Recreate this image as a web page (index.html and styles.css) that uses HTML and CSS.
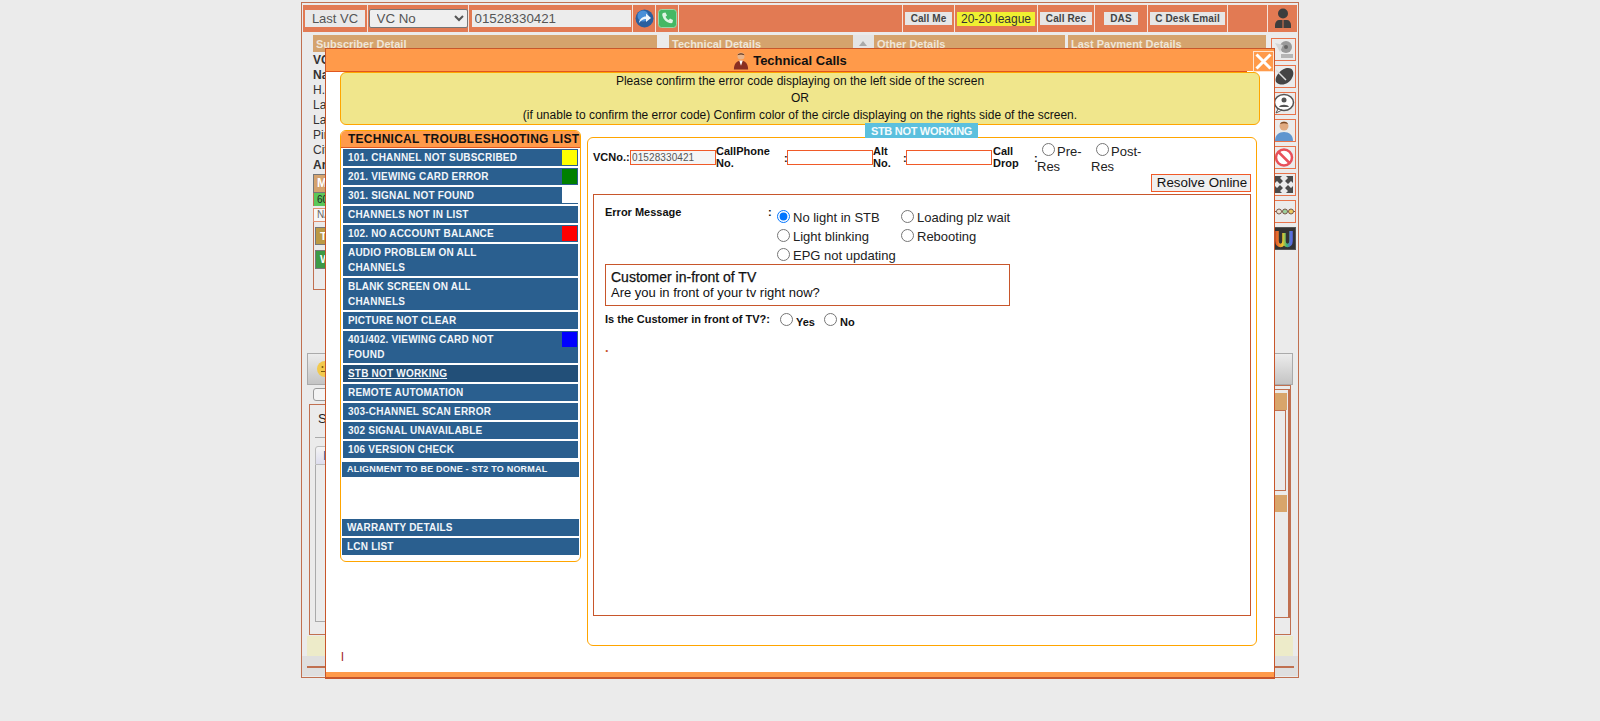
FILE: index.html
```html
<!DOCTYPE html>
<html lang="en">
<head>
  <meta charset="UTF-8">
  <title>Technical Calls</title>
  <link rel="stylesheet" href="styles.css">
</head>
<body>
<div class="app">

  <div class="toolbar">
    <div class="cell w65"><button class="btn-last">Last VC</button></div>
    <div class="cell w101"><select class="vc-select"><option>VC No</option></select></div>
    <div class="cell w164"><input class="vc-input" type="text" value="01528330421"></div>
    <div class="cell w23">
      <svg width="19" height="19" viewBox="0 0 19 19"><circle cx="9.500" cy="9.500" r="9" fill="#2b5f9e"/><circle cx="8" cy="7" r="5.500" fill="#4a8fd8"/><path d="M4 14c.5-4 3.500-6.500 7-6.500V4.500l5 4.500-5 4v-3c-3 0-5 1.500-7 4z" fill="#f2f6fb"/></svg>
    </div>
    <div class="cell w23">
      <svg width="19" height="19" viewBox="0 0 19 19"><rect x=".5" y=".5" width="18" height="18" rx="3" fill="#45b864" stroke="#9ad6a8"/><path d="M5 4l2.500-.5 1.500 3-1.500 1.200c.7 1.500 1.800 2.600 3.300 3.300l1.200-1.500 3 1.500-.5 2.500c-.3.600-1.500 1-3 .6C8 13 5.500 10.500 4.500 7 4 5.500 4.400 4.300 5 4z" fill="#dff5e4"/></svg>
    </div>
    <div class="cell grow"></div>
    <div class="cell w52"><button class="btn-small bw47">Call Me</button></div>
    <div class="cell w83"><span class="league">20-20 league</span></div>
    <div class="cell w57"><button class="btn-small bw52">Call Rec</button></div>
    <div class="cell w53"><button class="btn-small bw34">DAS</button></div>
    <div class="cell w80"><button class="btn-small bw75">C Desk Email</button></div>
    <div class="cell w40"></div>
    <div class="cell w29 last">
      <svg width="18" height="21" viewBox="0 0 18 21"><circle cx="9" cy="5.500" r="5" fill="#3d3d3d"/><path d="M1 20v-3c0-3 2-5 4-5h8c2 0 4 2 4 5v3z" fill="#3d3d3d"/><path d="M9 12v8" stroke="#e27a53"/></svg>
    </div>
  </div>

  <div class="upper">
    <div class="details">
      <div class="heads">
        <div class="head h-sub">Subscriber Detail</div>
        <div class="head h-tech">Technical Details</div>
        <div class="scroll-up"></div>
        <div class="head h-other">Other Details</div>
        <div class="head h-pay">Last Payment Details</div>
      </div>
      <div class="field strong">VC No</div>
      <div class="field strong">Name</div>
      <div class="field">H.No</div>
      <div class="field">Land Mark</div>
      <div class="field">Land Line</div>
      <div class="field">Pin</div>
      <div class="field">City</div>
      <div class="field strong">Area</div>
      <div class="m-box">
        <div class="m-head">M</div>
        <div class="m-green">60</div>
        <div class="m-na">NA</div>
      </div>
      <div class="t-box">
        <div class="t-head">To</div>
        <div class="w-head">W</div>
      </div>
    </div>
    <div class="side">
      <div class="side-icon">
        <svg width="22" height="21" viewBox="0 0 22 21"><circle cx="13" cy="8" r="6" fill="#9a9a9a"/><path d="M2 4l8 2-3 7z" fill="#d5d5d5"/><path d="M8 15h12v4H8z" fill="#b5b5b5"/><circle cx="13" cy="8" r="2" fill="#666"/></svg>
      </div>
      <div class="side-icon">
        <svg width="22" height="21" viewBox="0 0 22 21"><path d="M3 16C1 10 9 2 15 2c5 0 7 5 4 10-3 6-11 9-16 4z" fill="#444"/><path d="M3 4l10 10" stroke="#ddd" stroke-width="1.500"/></svg>
      </div>
      <div class="side-icon">
        <svg width="22" height="21" viewBox="0 0 22 21"><ellipse cx="11" cy="9.500" rx="9.500" ry="8" fill="#fff" stroke="#555" stroke-width="1.500"/><circle cx="11" cy="7" r="2.500" fill="#555"/><path d="M6 14c1-3 9-3 10 0z" fill="#555"/><path d="M5 16l-2 4 6-3z" fill="#fff" stroke="#555"/></svg>
      </div>
      <div class="side-icon">
        <svg width="22" height="21" viewBox="0 0 22 21"><circle cx="11" cy="6" r="4.500" fill="#e0aa80"/><path d="M7 4c1-3 7-3 8 0-3-1-5-1-8 0z" fill="#7a4a25"/><path d="M2 21c0-6 4-9 9-9s9 3 9 9z" fill="#5f95cf"/></svg>
      </div>
      <div class="side-icon">
        <svg width="22" height="21" viewBox="0 0 22 21"><circle cx="11" cy="10.500" r="8" fill="#fff" stroke="#e8505a" stroke-width="2.500"/><path d="M5.500 5l11 11" stroke="#e8505a" stroke-width="2.500"/></svg>
      </div>
      <div class="side-icon">
        <svg width="22" height="21" viewBox="0 0 22 21"><path d="M2 2h7L7 4l3 3-3 3-3-3-2 2zM20 2v7l-2-2-3 3-3-3 3-3-2-2zM2 19v-7l2 2 3-3 3 3-3 3 2 2zM20 19h-7l2-2-3-3 3-3 3 3 2-2z" fill="#4a4a4a"/></svg>
      </div>
      <div class="side-icon">
        <svg width="22" height="21" viewBox="0 0 22 21"><path d="M0 10.500h22" stroke="#7a5a4a"/><circle cx="6" cy="10.500" r="2.500" fill="#e9dfd0" stroke="#7a5a4a"/><circle cx="12" cy="10.500" r="2.500" fill="#9ccf9c" stroke="#7a5a4a"/><circle cx="18" cy="10.500" r="2.500" fill="#e8c860" stroke="#7a5a4a"/></svg>
      </div>
      <div class="side-icon dark">
        <svg width="22" height="21" viewBox="0 0 22 21"><defs><linearGradient id="rainbow" x1="0" x2="1" y1="0" y2="0"><stop offset="0" stop-color="#e8632c"/><stop offset=".4" stop-color="#e8c830"/><stop offset=".7" stop-color="#3cb878"/><stop offset="1" stop-color="#5a6ae0"/></linearGradient></defs><path d="M4 3v10c0 6 7 6 7 0V5v8c0 6 7 6 7 0V3" fill="none" stroke="url(#rainbow)" stroke-width="3.500"/></svg>
      </div>
    </div>
  </div>

  <div class="face-btn">
    <svg width="16" height="16" viewBox="0 0 16 16"><circle cx="8" cy="8" r="8" fill="#f2c94c"/><circle cx="5.500" cy="6" r="1" fill="#7a5a10"/><path d="M4 10.500h6" stroke="#7a5a10"/></svg>
  </div>

  <div class="lower">
    <div class="case-col">
      <div class="check-row"><span class="fake-check"></span></div>
      <div class="case-panel">
        <div class="case-title">S</div>
        <div class="case-rule"></div>
        <div class="case-tab">I</div>
        <div class="case-inner"></div>
      </div>
    </div>
    <div class="info-col">
      <div class="info-box">
        <div class="info-head"></div>
        <div class="info-body"></div>
        <div class="info-head second"></div>
      </div>
    </div>
  </div>

  <div class="yellow-strip"></div>
  <div class="footer-strip"><div class="footer-line"></div></div>

  <!-- popup -->
  <div class="modal">
    <div class="modal-title">
      <svg width="16" height="19" viewBox="0 0 18 20"><circle cx="9" cy="5" r="4" fill="#e8b48c"/><path d="M5 4c1-3 7-3 8 0-3-1-5-1-8 0z" fill="#5a3018"/><path d="M1 20c0-6 3-10 8-10s8 4 8 10z" fill="#8a2f22"/><path d="M7 10l2 6 2-6z" fill="#fff"/></svg>
      <span>Technical Calls</span>
    </div>
    <div class="modal-rule"></div>
    <button class="modal-close">
      <svg width="17" height="17" viewBox="0 0 17 17"><path d="M1.500 1.500l14 14M15.500 1.500l-14 14" stroke="#fff" stroke-width="3"/></svg>
    </button>

    <div class="notice">
      <div>Please confirm the error code displaying on the left side of the screen</div>
      <div>OR</div>
      <div>(if unable to confirm the error code) Confirm color of the circle displaying on the rights side of the screen.</div>
    </div>

    <div class="modal-body">
      <div class="trouble-list">
        <div class="trouble-head">TECHNICAL TROUBLESHOOTING LIST</div>
        <div class="trouble-items">
          <div class="item">101. CHANNEL NOT SUBSCRIBED<span class="swatch sw-yellow"></span></div>
          <div class="item">201. VIEWING CARD ERROR<span class="swatch sw-green"></span></div>
          <div class="item">301. SIGNAL NOT FOUND<span class="swatch sw-white"></span></div>
          <div class="item">CHANNELS NOT IN LIST</div>
          <div class="item">102. NO ACCOUNT BALANCE<span class="swatch sw-red"></span></div>
          <div class="item narrow">AUDIO PROBLEM ON ALL CHANNELS</div>
          <div class="item narrow">BLANK SCREEN ON ALL CHANNELS</div>
          <div class="item">PICTURE NOT CLEAR</div>
          <div class="item narrow">401/402. VIEWING CARD NOT FOUND<span class="swatch sw-blue"></span></div>
          <div class="item active">STB NOT WORKING</div>
          <div class="item">REMOTE AUTOMATION</div>
          <div class="item">303-CHANNEL SCAN ERROR</div>
          <div class="item">302 SIGNAL UNAVAILABLE</div>
          <div class="item">106 VERSION CHECK</div>
          <div class="item align">ALIGNMENT TO BE DONE - ST2 TO NORMAL</div>
          <div class="item wide warranty">WARRANTY DETAILS</div>
          <div class="item wide">LCN LIST</div>
        </div>
      </div>

      <div class="work-panel">
        <div class="work-tab">STB NOT WORKING</div>
        <div class="call-row">
          <label class="lbl lbl-vc">VCNo.:</label>
          <input class="call-input" type="text" value="01528330421">
          <label class="lbl lbl-phone">CallPhone No.</label>
          <span class="colon">:</span>
          <input class="call-input blank" type="text">
          <label class="lbl lbl-alt">Alt No.</label>
          <span class="colon">:</span>
          <input class="call-input blank" type="text">
          <label class="lbl lbl-drop">Call Drop</label>
          <span class="colon">:</span>
          <div class="res-choice"><input type="radio" name="drop">Pre-Res</div>
          <div class="res-choice"><input type="radio" name="drop">Post-Res</div>
        </div>
        <div class="resolve-row"><button class="resolve-btn">Resolve Online</button></div>

        <div class="error-box">
          <div class="error-row">
            <div class="lbl error-label">Error Message</div>
            <span class="colon error-colon">:</span>
            <div class="error-options">
              <label class="opt"><input type="radio" name="err" checked>No light in STB</label>
              <label class="opt"><input type="radio" name="err">Loading plz wait</label>
              <label class="opt"><input type="radio" name="err">Light blinking</label>
              <label class="opt"><input type="radio" name="err">Rebooting</label>
              <label class="opt"><input type="radio" name="err">EPG not updating</label>
            </div>
          </div>
          <div class="customer-box">
            <div class="customer-title">Customer in-front of TV</div>
            <div>Are you in front of your tv right now?</div>
          </div>
          <div class="question-row">
            <div class="lbl question-label">Is the Customer in front of TV?:</div>
            <label class="yes-no"><input type="radio" name="front">Yes</label>
            <label class="yes-no"><input type="radio" name="front">No</label>
          </div>
          <div class="error-dot">.</div>
        </div>
      </div>
    </div>

    <div class="modal-note">l</div>
    <div class="modal-bottom"></div>
  </div>
</div>
</body>
</html>
```

FILE: styles.css
```css
* {
  box-sizing: border-box;
}
html, body {
  height: 721px;
  overflow: hidden;
}
body {
  margin: 0;
  background-color: #ebebeb;
  color: #222;
  font-family: "Liberation Sans", Arial, sans-serif;
  font-size: 12px;
}
button, input, select {
  font-family: "Liberation Sans", Arial, sans-serif;
}

.app {
  position: relative;
  width: 998px;
  height: 676px;
  margin: 2px auto 0;
  padding-top: 2px;
  border: 1px solid #c07050;
  background-color: #ebebeb;
}

/* top bar */
.toolbar {
  display: flex;
  height: 27px;
  margin: 0 1px;
  background-color: #e27a53;
}
.cell {
  display: flex;
  align-items: center;
  justify-content: center;
  flex: none;
  border-right: 1px solid #f6e3da;
}
.cell.last {
  border-right: none;
}
.grow { flex: 1; }
.w65 { width: 65px; }
.w101 { width: 101px; }
.w164 { width: 164px; }
.w23 { width: 23px; }
.w52 { width: 52px; }
.w83 { width: 83px; }
.w57 { width: 57px; }
.w53 { width: 53px; }
.w80 { width: 80px; }
.w40 { width: 40px; }
.w29 { width: 29px; }
.btn-last {
  width: 60px;
  height: 17px;
  padding: 0;
  border: none;
  background-color: #e9e9e9;
  color: #555;
  font-size: 13px;
}
.vc-select {
  width: 99px;
  height: 19px;
  padding: 0 0 0 3px;
  border: 1px solid #767676;
  border-radius: 2px;
  background-color: #efefef;
  color: #555;
  font-size: 13.33px;
}
.vc-input {
  width: 159px;
  height: 17px;
  margin-left: 1px;
  padding: 0 3px;
  border: none;
  background-color: #ececec;
  color: #555;
  font-size: 13.33px;
}
.btn-small {
  height: 13px;
  padding: 0;
  border: none;
  background-color: #e6e6e6;
  color: #444;
  font-size: 10px;
  font-weight: bold;
  letter-spacing: .1px;
}
.bw47 { width: 47px; }
.bw52 { width: 52px; }
.bw34 { width: 34px; }
.bw75 { width: 75px; }
.league {
  width: 78px;
  height: 14px;
  background-color: #f0f030;
  color: #333;
  font-size: 12px;
  line-height: 14px;
  text-align: center;
}

/* page behind the popup */
.upper {
  display: flex;
  height: 318px;
}
.details {
  flex: 1;
  min-width: 0;
  padding: 3px 0 0 11px;
}
.heads {
  display: flex;
  height: 17px;
  margin-bottom: 1px;
}
.head {
  height: 17px;
  padding-left: 3px;
  background-color: #d5a36d;
  color: #f0e6d8;
  font-size: 11px;
  font-weight: bold;
  line-height: 18px;
}
.h-sub { width: 344px; margin-right: 12px; }
.h-tech { width: 184px; }
.h-other { width: 191px; margin-right: 3px; }
.h-pay { width: 198px; }
.scroll-up {
  position: relative;
  width: 21px;
  background-color: #e4e4e4;
}
.scroll-up::after {
  content: "";
  position: absolute;
  left: 6px;
  top: 6px;
  border: 4px solid transparent;
  border-top: none;
  border-bottom: 5px solid #aaa;
}
.field {
  height: 15px;
  color: #333;
  font-size: 12px;
  line-height: 15px;
}
.strong {
  font-weight: bold;
}
.m-box {
  margin-top: 1px;
}
.m-head {
  width: 300px;
  height: 19px;
  padding-left: 3px;
  border: 1px solid #777;
  background-color: #d5a36d;
  color: #fff;
  font-weight: bold;
  line-height: 17px;
}
.m-green {
  width: 300px;
  height: 13px;
  padding-left: 3px;
  background-color: #5ac85a;
  border-left: 1px solid #c07050;
  font-size: 10px;
  line-height: 13px;
}
.m-na {
  width: 300px;
  height: 14px;
  margin-top: 2px;
  padding-left: 3px;
  border: 1px solid #e09070;
  background-color: #f7f7f7;
  color: #666;
  font-size: 10px;
  line-height: 12px;
}
.t-box {
  width: 300px;
  height: 68px;
  padding: 5px 0 0 1px;
  border-left: 1px solid #c07050;
  border-bottom: 1px solid #c07050;
}
.t-head {
  height: 18px;
  padding-left: 4px;
  border: 1px solid #777;
  background-color: #bb9a45;
  color: #fff;
  font-size: 11px;
  font-weight: bold;
  line-height: 16px;
}
.w-head {
  height: 19px;
  margin-top: 5px;
  padding-left: 4px;
  border: 1px solid #777;
  background-color: #3c9a46;
  color: #fff;
  font-size: 11px;
  font-weight: bold;
  line-height: 17px;
}
.side {
  display: flex;
  flex-direction: column;
  gap: 4px;
  flex: none;
  width: 25px;
  margin: 6px 2px 0 5px;
}
.side-icon {
  display: flex;
  align-items: center;
  justify-content: center;
  width: 25px;
  height: 23px;
  border: 1px solid #e8734a;
}
.side-icon.dark {
  background-color: #333;
  border-color: #555;
}
.face-btn {
  display: flex;
  align-items: center;
  height: 32px;
  margin: 3px 5px 0;
  padding-left: 9px;
  border: 1px solid #aaa;
  background: linear-gradient(#ececec, #c4c4c4);
}
.lower {
  display: flex;
  height: 250px;
  margin-left: 7px;
  margin-right: 7px;
}
.case-col {
  width: 500px;
}
.check-row {
  height: 19px;
  padding: 3px 0 0 4px;
}
.fake-check {
  display: block;
  width: 40px;
  height: 13px;
  border: 1px solid #999;
  border-radius: 3px;
  background-color: #f4f4f4;
}
.case-panel {
  height: 231px;
  padding: 6px 0 0 5px;
  border: 1px solid #c07050;
  border-right: none;
}
.case-title {
  margin-left: 3px;
  font-size: 13px;
  line-height: 15px;
}
.case-rule {
  height: 1px;
  margin-top: 11px;
  background-color: #aaa;
}
.case-tab {
  width: 60px;
  height: 19px;
  margin-top: 8px;
  padding-left: 7px;
  border: 1px solid #bbb;
  border-radius: 3px 3px 0 0;
  background: linear-gradient(#f4f4f4, #ddddee);
  color: #1a5fa0;
  font-size: 12px;
  line-height: 18px;
}
.case-inner {
  height: 157px;
  border-left: 1px solid #aaa;
  border-bottom: 1px solid #aaa;
}
.info-col {
  flex: 1;
  height: 250px;
  padding-top: 3px;
  border: 1px solid #c07050;
  border-left: none;
}
.info-box {
  height: 229px;
  padding-top: 3px;
  border-top: 1px solid #c07050;
  border-right: 2px solid #c07050;
  border-bottom: 1px solid #c07050;
}
.info-head {
  height: 17px;
  margin-right: 1px;
  background-color: #d8a56b;
}
.info-head.second {
  margin-top: 4px;
}
.info-body {
  height: 81px;
  margin-right: 2px;
  border: 1px solid #c07050;
  border-left: none;
}
.yellow-strip {
  height: 20px;
  margin: 1px 5px 0;
  background-color: #edebc9;
}
.footer-strip {
  height: 20px;
  padding: 10px 4px 0 5px;
  background-color: #dfdfdf;
}
.footer-line {
  height: 2px;
  background-color: #c07050;
}

/* popup */
.modal {
  position: absolute;
  left: 23px;
  top: 45px;
  display: flex;
  flex-direction: column;
  width: 950px;
  height: 631px;
  border: 1px solid #c8562b;
  border-bottom-width: 2px;
  background-color: #fff;
  color: #111;
}
.modal-title {
  display: flex;
  align-items: center;
  justify-content: center;
  gap: 4px;
  flex: none;
  height: 22px;
  padding-right: 20px;
  background-color: #ff9a4a;
  color: #111;
  font-size: 13px;
  font-weight: bold;
}
.modal-rule {
  flex: none;
  height: 1px;
  margin-right: 27px;
  background-color: #e0561f;
}
.modal-close {
  position: absolute;
  top: 2px;
  right: 0;
  display: flex;
  align-items: center;
  justify-content: center;
  width: 21px;
  height: 21px;
  padding: 0;
  border: 1px solid #ffe3cc;
  background-color: #ff9a4a;
}
.notice {
  flex: none;
  height: 53px;
  margin: 0 14px;
  border: 1px solid #ffa500;
  border-radius: 6px;
  background-color: #f0e68c;
  font-size: 12px;
  line-height: 17px;
  text-align: center;
}
.modal-body {
  display: flex;
  flex: none;
  align-items: flex-start;
  margin: 5px 14px 0;
}
.trouble-list {
  flex: none;
  width: 241px;
  height: 432px;
  border: 1px solid #ffa500;
  border-radius: 6px;
}
.trouble-head {
  height: 17px;
  padding-left: 7px;
  border-bottom: 1px solid #e0561f;
  border-radius: 5px 5px 0 0;
  background-color: #ff9a4a;
  color: #111;
  font-size: 12px;
  font-weight: bold;
  letter-spacing: .25px;
  line-height: 17px;
  white-space: nowrap;
}
.trouble-items {
  display: flex;
  flex-direction: column;
  gap: 2px;
  margin-top: 1px;
  padding: 0 1px;
}
.item {
  position: relative;
  margin: 0 1px;
  padding: 1px 20px 1px 5px;
  background-color: #2a5f8f;
  color: #f2f6fa;
  font-size: 10px;
  font-weight: bold;
  letter-spacing: .2px;
  line-height: 15px;
}
.item.narrow {
  padding-right: 70px;
}
.item.active {
  background-color: #224f78;
  text-decoration: underline;
}
.item.align {
  height: 15px;
  margin: 2px 0 0;
  padding: 0 0 0 5px;
  font-size: 9px;
  letter-spacing: .2px;
}
.item.wide {
  margin: 0;
}
.item.warranty {
  margin-top: 40px;
}
.swatch {
  position: absolute;
  top: 1px;
  right: 1px;
  width: 15px;
  height: 15px;
}
.sw-yellow { background-color: #ff0; }
.sw-green { background-color: #008000; }
.sw-red { background-color: #f00; }
.sw-blue { background-color: #00f; }
.sw-white {
  top: 0;
  right: 0;
  width: 16px;
  height: 16px;
  background-color: #fff;
}

.work-panel {
  position: relative;
  flex: none;
  width: 670px;
  height: 509px;
  margin: 7px 0 0 6px;
  padding: 0 5px;
  border: 1px solid #ffa500;
  border-radius: 6px;
}
.work-tab {
  position: absolute;
  left: 277px;
  top: -15px;
  width: 113px;
  height: 15px;
  background-color: #5bc0de;
  color: #f4fbfd;
  font-size: 11px;
  font-weight: bold;
  letter-spacing: -.3px;
  line-height: 16px;
  text-align: center;
}
.call-row {
  display: flex;
  align-items: flex-start;
  height: 36px;
  padding-top: 6px;
}
.lbl {
  color: #111;
  font-size: 11px;
  font-weight: bold;
  line-height: 12px;
}
.lbl-vc { width: 37px; margin-top: 7px; }
.lbl-phone { width: 68px; margin-top: 1px; }
.lbl-alt { width: 30px; margin-top: 1px; }
.lbl-drop { width: 41px; margin-top: 1px; margin-left: 1px; }
.colon {
  width: 3px;
  color: #111;
  font-size: 11px;
  font-weight: bold;
  line-height: 12px;
  margin-top: 8px;
}
.call-input {
  width: 86px;
  height: 15px;
  margin-top: 6px;
  padding: 0 2px 0 1px;
  border: 1px solid #f05a28;
  background-color: #f5f5f5;
  color: #555;
  font-size: 10px;
  letter-spacing: .1px;
}
.call-input.blank {
  background-color: #fff;
}
.res-choice {
  width: 55px;
  margin-top: -1px;
  color: #222;
  font-size: 13px;
  line-height: 15px;
}
.res-choice input {
  margin: 0 2px 0 5px;
}
.res-choice + .res-choice {
  margin-left: -1px;
}
.resolve-row {
  display: flex;
  justify-content: flex-end;
  height: 20px;
}
.resolve-btn {
  width: 100px;
  height: 18px;
  padding: 0 0 0 2px;
  border: 1px solid #f05a28;
  background-color: #efefef;
  color: #111;
  font-size: 13.33px;
  line-height: 14px;
}
.error-box {
  height: 422px;
  padding-top: 12px;
  border: 1px solid #c8562b;
}
.error-row {
  display: flex;
  padding-left: 11px;
}
.error-label {
  width: 163px;
  margin-top: -1px;
}
.error-colon {
  width: 9px;
  margin-top: -1px;
}
.error-options {
  display: grid;
  grid-template-columns: 124px auto;
  grid-auto-rows: 19px;
  justify-content: start;
}
.opt {
  display: flex;
  align-items: center;
  padding-top: 1px;
  color: #222;
  font-size: 13px;
}
.opt input {
  margin: -1px 3px 0 0;
}
.customer-box {
  width: 405px;
  height: 42px;
  margin-left: 11px;
  padding: 5px 5px 0;
  border: 1px solid #c8562b;
  color: #111;
  font-size: 13px;
  line-height: 15px;
}
.customer-title {
  font-size: 14px;
  -webkit-text-stroke: .25px #111;
}
.question-row {
  display: flex;
  align-items: flex-start;
  height: 20px;
  margin-top: 7px;
  padding-left: 11px;
}
.question-label {
  width: 175px;
}
.yes-no {
  display: flex;
  align-items: flex-start;
  margin-right: 9px;
  padding-top: 3px;
  color: #111;
  font-size: 11px;
  font-weight: bold;
  line-height: 13px;
}
.yes-no input {
  margin: -3px 3px 0 0;
}
.error-dot {
  margin: 7px 0 0 11px;
  color: #c8562b;
  font-size: 13px;
  font-weight: bold;
  line-height: 15px;
}
.modal-note {
  flex: none;
  margin: 3px 0 0 15px;
  color: #a52a2a;
  font-size: 13px;
  line-height: 15px;
}
.modal-bottom {
  flex: none;
  height: 5px;
  margin-top: auto;
  background-color: #ff9a4a;
}
```
